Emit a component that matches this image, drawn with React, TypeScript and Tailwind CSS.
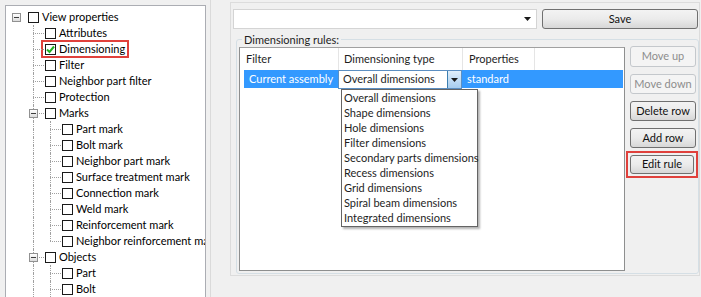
import React from "react";

type Node = {
  label: string;
  level: number;
  expander?: boolean;
  checked?: boolean;
  highlight?: boolean;
  last?: boolean;
};

const tree: Node[] = [
  { label: "View properties", level: 0, expander: true },
  { label: "Attributes", level: 1 },
  { label: "Dimensioning", level: 1, checked: true, highlight: true },
  { label: "Filter", level: 1 },
  { label: "Neighbor part filter", level: 1 },
  { label: "Protection", level: 1 },
  { label: "Marks", level: 1, expander: true },
  { label: "Part mark", level: 2 },
  { label: "Bolt mark", level: 2 },
  { label: "Neighbor part mark", level: 2 },
  { label: "Surface treatment mark", level: 2 },
  { label: "Connection mark", level: 2 },
  { label: "Weld mark", level: 2 },
  { label: "Reinforcement mark", level: 2 },
  { label: "Neighbor reinforcement mark", level: 2, last: true },
  { label: "Objects", level: 1, expander: true },
  { label: "Part", level: 2 },
  { label: "Bolt", level: 2 },
  { label: "Weld", level: 2 },
];

const dimTypes = [
  "Overall dimensions",
  "Shape dimensions",
  "Hole dimensions",
  "Filter dimensions",
  "Secondary parts dimensions",
  "Recess dimensions",
  "Grid dimensions",
  "Spiral beam dimensions",
  "Integrated dimensions",
];

function Cell({
  vTop,
  vBottom,
  h,
  expander,
}: {
  vTop?: boolean;
  vBottom?: boolean;
  h?: boolean;
  expander?: boolean;
}) {
  return (
    <div className="relative w-[17px] h-4 shrink-0">
      {vTop && (
        <span className="absolute left-[8px] top-0 h-1/2 border-l border-dotted border-[#a0a0a0]" />
      )}
      {vBottom && (
        <span className="absolute left-[8px] top-1/2 bottom-0 border-l border-dotted border-[#a0a0a0]" />
      )}
      {h && (
        <span className="absolute left-[8px] right-[-2px] top-1/2 border-t border-dotted border-[#a0a0a0]" />
      )}
      {expander && (
        <span className="absolute left-[4px] top-[4px] w-[9px] h-[9px] border border-[#919191] bg-gradient-to-b from-white to-[#dcdcdc] flex items-center justify-center">
          <span className="w-[5px] h-px bg-[#3d3d3d]" />
        </span>
      )}
    </div>
  );
}

function Checkbox({ checked }: { checked?: boolean }) {
  return (
    <span className="w-[11px] h-[11px] border-[1.5px] border-[#1a1a1a] bg-white flex items-center justify-center shrink-0">
      {checked && (
        <svg width="9" height="9" viewBox="0 0 9 9">
          <path d="M1 4.5 L3.5 7 L8 1.5" stroke="#22b322" strokeWidth="2" fill="none" />
        </svg>
      )}
    </span>
  );
}

function TreeRow({ node, index }: { node: Node; index: number }) {
  const inMarks = index >= 7 && index <= 14;
  const cols: React.ReactNode[] = [];
  cols.push(<Cell key="c0" expander={node.level === 0 && node.expander} />);
  if (node.level >= 1) {
    const own = node.level === 1;
    cols.push(
      <Cell key="c1" vTop vBottom h={own} expander={own && node.expander} />
    );
  }
  if (node.level === 2) {
    cols.push(
      <Cell key="c2" vTop vBottom={!(inMarks && node.last)} h />
    );
  }
  return (
    <div className="flex items-center h-4">
      {cols}
      <div
        className={
          node.highlight
            ? "flex items-center gap-[3px] h-[18px] pl-[2px] pr-[2px] -ml-[1px] border-2 border-[#e0413c] shrink-0"
            : "flex items-center gap-[3px] pl-[3px] shrink-0"
        }
      >
        <Checkbox checked={node.checked} />
        <span className="whitespace-nowrap text-black">{node.label}</span>
      </div>
    </div>
  );
}

function WinButton({
  children,
  disabled,
  className = "",
}: {
  children: React.ReactNode;
  disabled?: boolean;
  className?: string;
}) {
  return (
    <div
      className={
        (disabled
          ? "border-[#c4c8cc] text-[#8d8d8d] bg-[#f4f4f4] "
          : "border-[#707070] text-[#111] bg-gradient-to-b from-[#f3f3f3] via-[#ebebeb] to-[#d7d7d7] ") +
        "border rounded-[3px] flex items-center justify-center whitespace-nowrap " +
        className
      }
    >
      {children}
    </div>
  );
}

export default function App() {
  return (
    <div
      className="w-[701px] h-[297px] bg-[#f0f0f0] flex overflow-hidden text-[11px] text-[#1e1e1e]"
      style={{ fontFamily: "Lato, 'Noto Sans', sans-serif" }}
    >
      {/* tree panel */}
      <div className="pl-[5px] pt-[5px] w-[211px] shrink-0 border-r border-[#dadada]">
        <div className="w-[201px] h-[300px] bg-white border border-[#abadb3] overflow-hidden pt-[3px] pl-[2px]">
          {tree.map((n, i) => (
            <TreeRow key={i} node={n} index={i} />
          ))}
        </div>
      </div>

      {/* right panel */}
      <div className="ml-[19px] mt-[2px] w-[470px] h-[274px] border border-[#dcdcdc] bg-[#f0f0f0] flex flex-col">
        <div className="flex items-center gap-[5px] pl-[2px] pt-[6px]">
          <div className="w-[304px] h-[20px] bg-white border border-[#d4d4d4] flex items-center justify-end pr-[5px]">
            <svg width="7" height="4" viewBox="0 0 7 4">
              <path d="M0 0 H7 L3.5 4 Z" fill="#1a1a1a" />
            </svg>
          </div>
          <WinButton className="w-[156px] h-[20px]">Save</WinButton>
        </div>

        {/* group box */}
        <div className="relative ml-[5px] mt-[10px] w-[463px] h-[235px] border border-[#d5dfe5] rounded-[3px] flex">
          <span className="absolute left-[5px] top-[-8px] px-[2px] bg-[#f0f0f0] text-[#1e1e1e] leading-4">
            Dimensioning rules:
          </span>
          <div className="mt-[7px] ml-[2px] w-[386px] h-[224px] bg-white border border-[#8e8f8f] border-t-[#a0a0a0] relative">
            {/* header */}
            <div className="flex h-[22px] items-center">
              <div className="w-[99px] h-full pl-[6px] flex items-center border-r border-[#e5e5e5]">
                Filter
              </div>
              <div className="w-[124px] h-full pl-[5px] flex items-center border-r border-[#e5e5e5]">
                Dimensioning type
              </div>
              <div className="w-[72px] h-full pl-[6px] flex items-center border-r border-[#e5e5e5]">
                Properties
              </div>
            </div>
            {/* selected row */}
            <div className="flex h-[18px] ml-[4px] mr-[1px] bg-[#3399ff] text-white">
              <div className="w-[95px] pl-[5px] flex items-center whitespace-nowrap">
                Current assembly
              </div>
              <div className="w-[124px] -ml-[1px] h-[19px] bg-white border border-[#5c8fc2] text-[#1e1e1e] flex items-center justify-between">
                <span className="pl-[4px] whitespace-nowrap">Overall dimensions</span>
                <span className="w-[14px] h-full bg-gradient-to-b from-[#e0eef9] to-[#a7cdef] border-l border-[#3c7fb1] flex items-center justify-center">
                  <svg width="7" height="4" viewBox="0 0 7 4">
                    <path d="M0 0 H7 L3.5 4 Z" fill="#1a1a1a" />
                  </svg>
                </span>
              </div>
              <div className="pl-[5px] flex items-center">standard</div>
            </div>
            {/* dropdown list */}
            <div className="absolute left-[101px] top-[41px] w-[137px] bg-white border border-[#646464] shadow-[2px_2px_2px_rgba(0,0,0,0.3)] text-[#1e1e1e] pt-[1px]">
              {dimTypes.map((t) => (
                <div key={t} className="h-[15px] pl-[2px] flex items-center whitespace-nowrap">
                  {t}
                </div>
              ))}
            </div>
          </div>

          {/* side buttons */}
          <div className="ml-[5px] pt-[6px] flex flex-col gap-[7px]">
            <WinButton disabled className="w-[66px] h-[21px]">Move up</WinButton>
            <WinButton disabled className="w-[66px] h-[20px]">Move down</WinButton>
            <WinButton className="w-[66px] h-[20px]">Delete row</WinButton>
            <WinButton className="w-[66px] h-[20px]">Add row</WinButton>
            <div className="-ml-[4px] -mt-[4px] w-[72px] h-[27px] border-2 border-[#e0413c] flex items-center justify-center">
              <WinButton className="w-[64px] h-[19px]">Edit rule</WinButton>
            </div>
          </div>
        </div>
      </div>
    </div>
  );
}
